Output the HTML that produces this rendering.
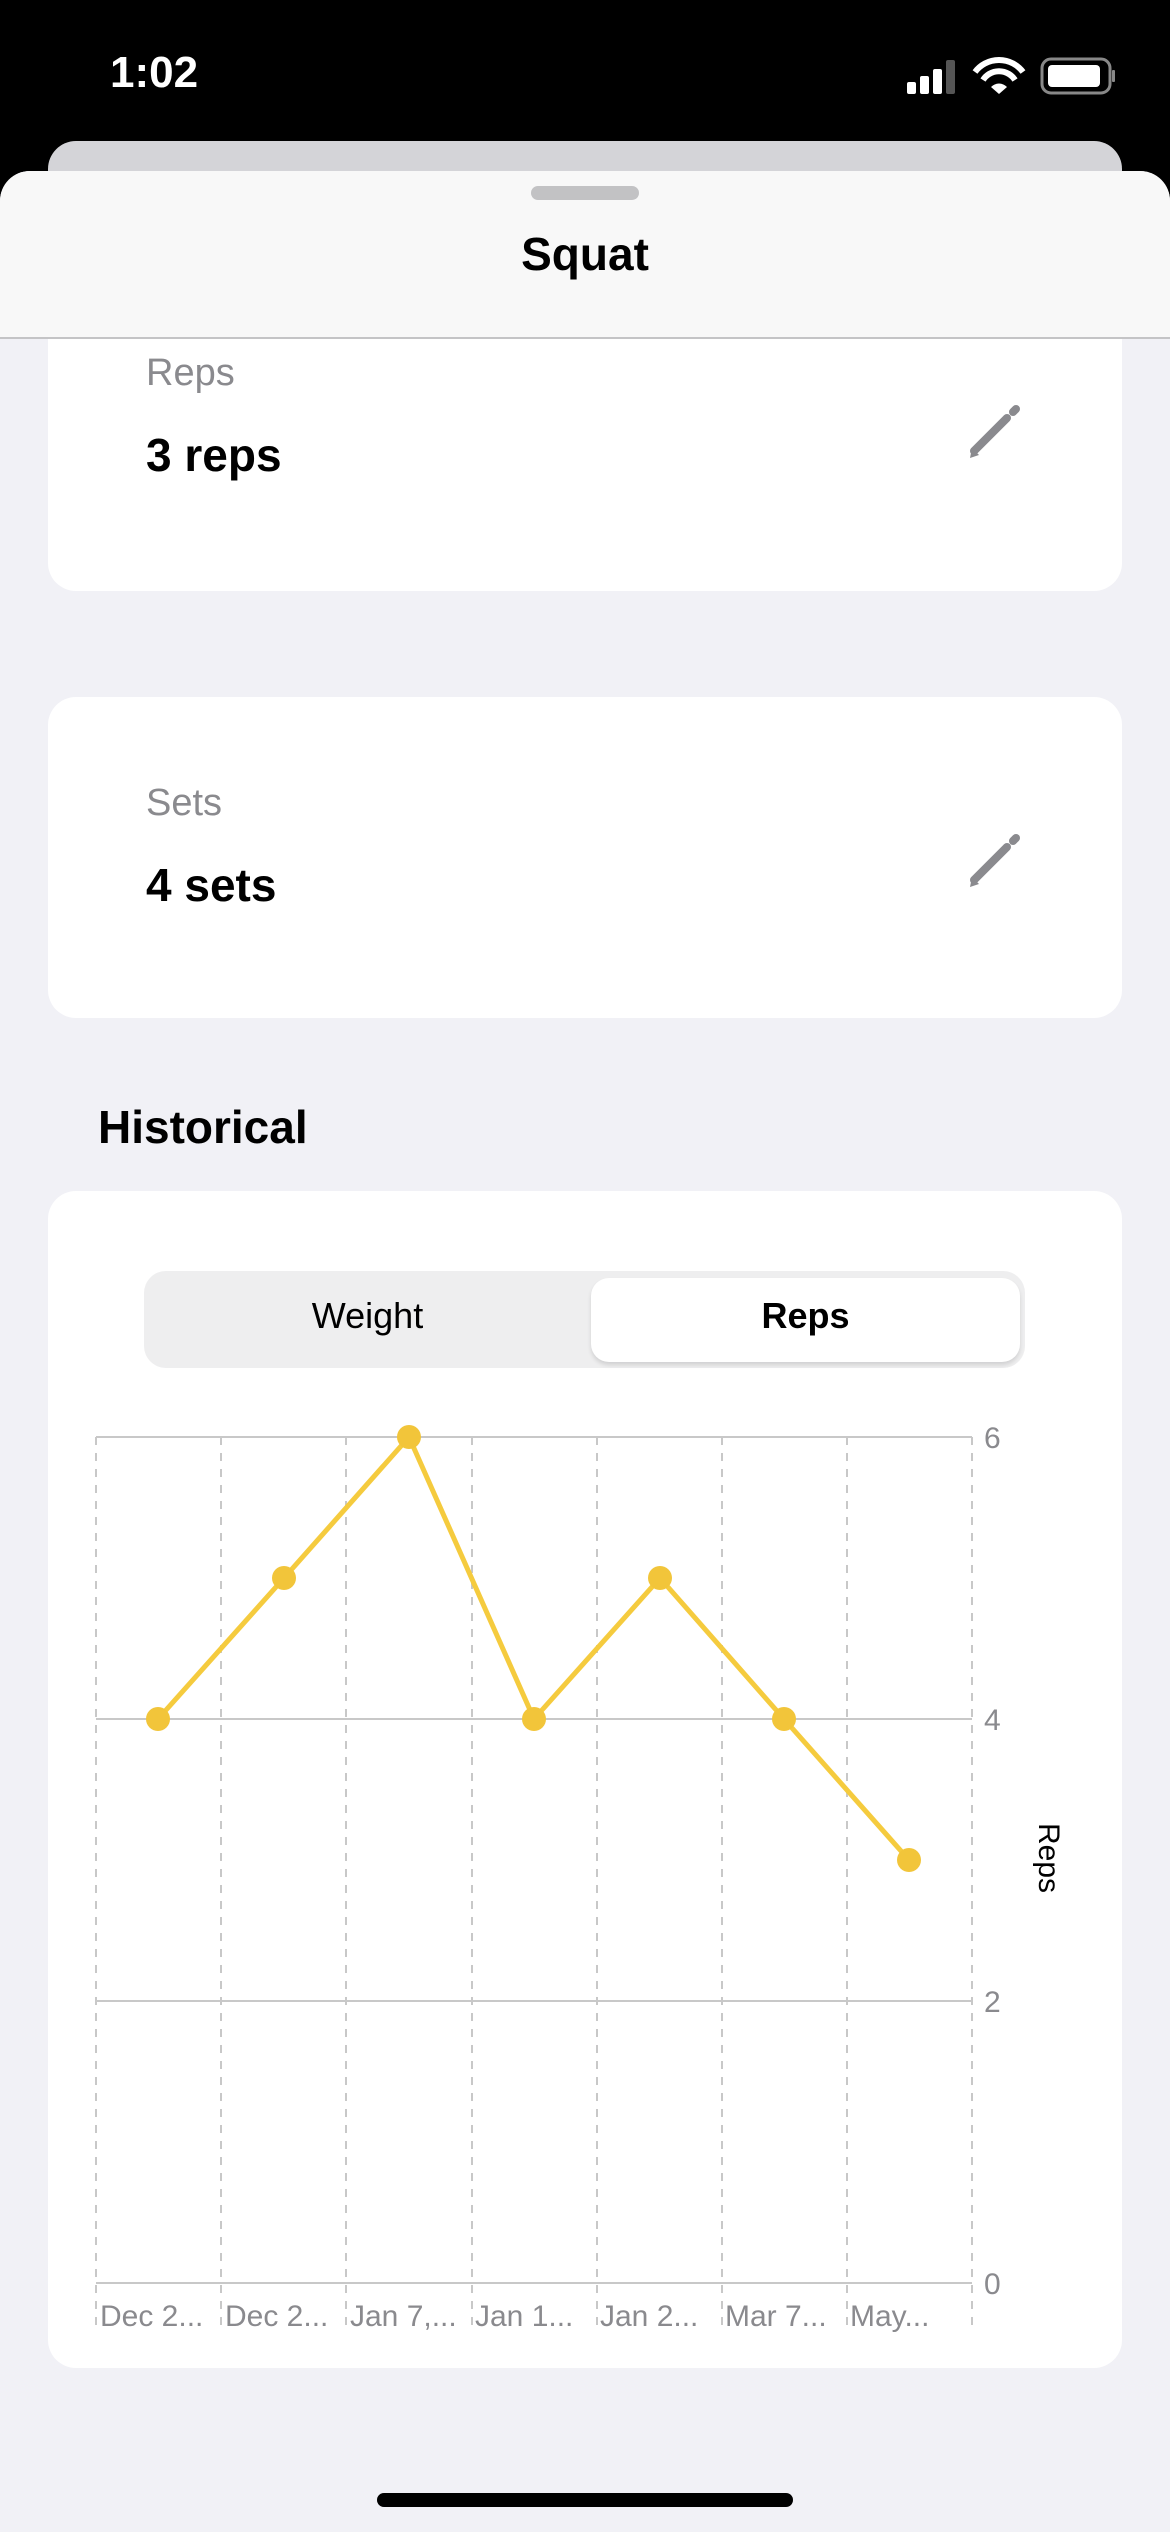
<!DOCTYPE html>
<html><head><meta charset="utf-8"><style>
*{margin:0;padding:0;box-sizing:border-box}
body{width:1170px;height:2532px;background:#000;position:relative;overflow:hidden;font-family:"Liberation Sans",sans-serif}
.abs{position:absolute}
.card{position:absolute;left:48px;width:1074px;background:#fff;border-radius:28px}
.lbl{position:absolute;left:98px;font-size:38px;color:#8a8a8e}
.val{position:absolute;left:98px;font-size:46px;font-weight:bold;color:#000}
</style></head><body>
<div class="abs" style="left:110px;top:48px;font-size:44px;color:#fff;font-weight:600">1:02</div>
<svg class="abs" style="left:905px;top:56px" width="210" height="40" viewBox="0 0 210 40">
<rect x="2" y="26" width="9" height="12" rx="2" fill="#fff"/>
<rect x="15" y="20" width="9" height="18" rx="2" fill="#fff"/>
<rect x="28" y="13" width="9" height="25" rx="2" fill="#fff"/>
<rect x="41" y="4" width="9" height="34" rx="2" fill="#555"/>
<path d="M70 16 A30 30 0 0 1 118 16" stroke="#fff" stroke-width="6" fill="none"/>
<path d="M78 24 A19 19 0 0 1 110 24" stroke="#fff" stroke-width="6" fill="none"/>
<path d="M86 31 L94 38 L102 31 A11 11 0 0 0 86 31Z" fill="#fff"/>
<rect x="137" y="3" width="68" height="34" rx="9" stroke="#888" stroke-width="3" fill="none"/>
<rect x="143" y="9" width="52" height="22" rx="4" fill="#fff"/>
<rect x="207" y="14" width="3" height="12" rx="1" fill="#888"/>
</svg>
<div class="abs" style="left:48px;top:141px;width:1074px;height:80px;background:#d4d4d8;border-radius:28px 28px 0 0"></div>
<div class="abs" style="left:0;top:171px;width:1170px;height:2361px;background:#f1f1f6;border-radius:30px 30px 0 0;overflow:hidden">
 <div class="card" style="top:-40px;height:460px"></div>
 <div class="card" style="top:526px;height:321px"></div>
 <div class="card" style="top:1020px;height:1177px"></div>
 <div class="abs" style="left:0;top:0;width:1170px;height:168px;background:#f8f8f8;border-bottom:2px solid #c4c4c6"></div>
 <div class="abs" style="left:531px;top:15px;width:108px;height:14px;border-radius:7px;background:#c2c2c4"></div>
 <div class="abs" style="left:0;top:56px;width:1170px;text-align:center;font-size:46px;font-weight:600">Squat</div>
</div>
<div class="lbl" style="left:146px;top:352px">Reps</div>
<div class="val" style="left:146px;top:428px">3 reps</div>
<div class="lbl" style="left:146px;top:782px">Sets</div>
<div class="val" style="left:146px;top:858px">4 sets</div>
<svg class="abs" style="left:965px;top:403px" width="58" height="58" viewBox="0 0 58 58"><g stroke="#8a8a8e" stroke-width="8" stroke-linecap="round"><line x1="9" y1="48" x2="42" y2="15"/><line x1="48" y1="9" x2="51" y2="6"/></g><path d="M5 55 L7 45 L14 52 Z" fill="#8a8a8e"/></svg>
<svg class="abs" style="left:965px;top:832px" width="58" height="58" viewBox="0 0 58 58"><g stroke="#8a8a8e" stroke-width="8" stroke-linecap="round"><line x1="9" y1="48" x2="42" y2="15"/><line x1="48" y1="9" x2="51" y2="6"/></g><path d="M5 55 L7 45 L14 52 Z" fill="#8a8a8e"/></svg>
<div class="abs" style="left:98px;top:1100px;font-size:46px;font-weight:600">Historical</div>
<div class="abs" style="left:144px;top:1271px;width:881px;height:97px;background:#eeeeef;border-radius:22px"></div>
<div class="abs" style="left:591px;top:1278px;width:429px;height:84px;background:#fff;border-radius:18px;box-shadow:0 3px 4px rgba(0,0,0,0.12)"></div>
<div class="abs" style="left:144px;top:1295px;width:447px;text-align:center;font-size:36px">Weight</div>
<div class="abs" style="left:591px;top:1295px;width:429px;text-align:center;font-size:36px;font-weight:600">Reps</div>
<svg class="abs" style="left:0;top:1400px" width="1170" height="960" viewBox="0 1400 1170 960">
<g stroke="#c8c8c8" stroke-width="2" stroke-dasharray="8 8">
<line x1="96" y1="1437" x2="96" y2="2330"/><line x1="221" y1="1437" x2="221" y2="2330"/><line x1="346" y1="1437" x2="346" y2="2330"/><line x1="472" y1="1437" x2="472" y2="2330"/><line x1="597" y1="1437" x2="597" y2="2330"/><line x1="722" y1="1437" x2="722" y2="2330"/><line x1="847" y1="1437" x2="847" y2="2330"/><line x1="972" y1="1437" x2="972" y2="2330"/>
</g>
<g stroke="#c8c8c8" stroke-width="2">
<line x1="96" y1="1437" x2="972" y2="1437"/><line x1="96" y1="1719" x2="972" y2="1719"/><line x1="96" y1="2001" x2="972" y2="2001"/><line x1="96" y1="2283" x2="972" y2="2283"/>
</g>
<polyline points="158,1719 284,1578 409,1437 534,1719 660,1578 784,1719 909,1860" fill="none" stroke="#f5cb3e" stroke-width="5" stroke-linejoin="round"/>
<g fill="#f2c53a"><circle cx="158" cy="1719" r="12"/><circle cx="284" cy="1578" r="12"/><circle cx="409" cy="1437" r="12"/><circle cx="534" cy="1719" r="12"/><circle cx="660" cy="1578" r="12"/><circle cx="784" cy="1719" r="12"/><circle cx="909" cy="1860" r="12"/></g>
<g font-family="Liberation Sans" font-size="30" fill="#8a8a8e">
<text x="984" y="1448">6</text><text x="984" y="1730">4</text><text x="984" y="2012">2</text><text x="984" y="2294">0</text>
<text x="100" y="2326">Dec 2...</text><text x="225" y="2326">Dec 2...</text><text x="350" y="2326">Jan 7,...</text><text x="475" y="2326">Jan 1...</text><text x="600" y="2326">Jan 2...</text><text x="725" y="2326">Mar 7...</text><text x="850" y="2326">May...</text>
</g>
<text x="0" y="0" font-family="Liberation Sans" font-size="30" fill="#000" text-anchor="middle" transform="translate(1039,1858) rotate(90)">Reps</text>
</svg>
<div class="abs" style="left:377px;top:2493px;width:416px;height:14px;border-radius:7px;background:#000"></div>
</body></html>
